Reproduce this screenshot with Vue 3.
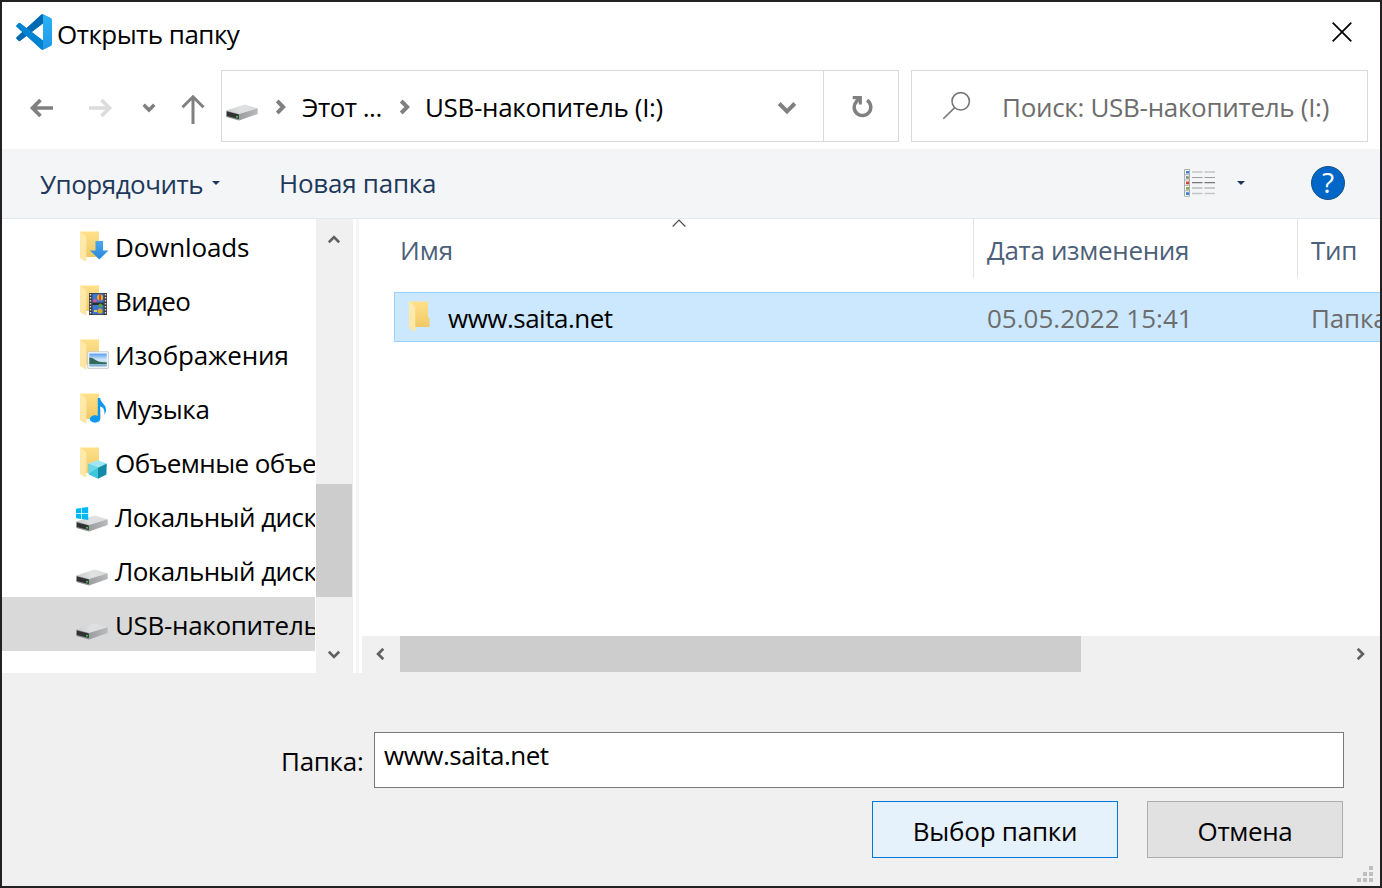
<script setup>
const places = [
  { name: 'Downloads', kind: 'down', ls: '-0.15px' },
  { name: 'Видео', kind: 'video', ls: '-0.65px' },
  { name: 'Изображения', kind: 'image', ls: '-0.1px' },
  { name: 'Музыка', kind: 'music', ls: '-0.4px' },
  { name: 'Объемные объекты', kind: 'cube', ls: '-0.58px' },
  { name: 'Локальный диск (C:)', kind: 'windrive', ls: '-0.55px' },
  { name: 'Локальный диск (D:)', kind: 'drive', ls: '-0.55px' },
  { name: 'USB-накопитель (I:)', kind: 'drive', ls: '-0.33px', current: true },
]
const isDrive = (k) => k === 'drive' || k === 'windrive'
</script>

<template>
  <div class="window">
    <svg class="defs" width="0" height="0">
      <defs>
        <linearGradient id="gBack" x1="0" y1="0" x2="0" y2="1">
          <stop offset="0" stop-color="#ffe18a" /><stop offset="1" stop-color="#efc966" />
        </linearGradient>
        <linearGradient id="gFlap" x1="0" y1="0" x2="0" y2="1">
          <stop offset="0" stop-color="#ffeaad" /><stop offset="1" stop-color="#fde6a4" />
        </linearGradient>
        <linearGradient id="gTop" x1="0" y1="0" x2="1" y2="0">
          <stop offset="0" stop-color="#cbcccd" /><stop offset="0.5" stop-color="#e0e1e3" /><stop offset="1" stop-color="#d9dadc" />
        </linearGradient>
        <linearGradient id="gSide" x1="0" y1="0" x2="1" y2="0">
          <stop offset="0" stop-color="#9c9d9f" /><stop offset="1" stop-color="#b9babc" />
        </linearGradient>
        <linearGradient id="gArrow" x1="0" y1="0" x2="0" y2="1">
          <stop offset="0" stop-color="#4aa8ec" /><stop offset="1" stop-color="#2a88dc" />
        </linearGradient>
        <linearGradient id="gSky" x1="0" y1="0" x2="0" y2="1">
          <stop offset="0" stop-color="#5a9bf0" /><stop offset="0.5" stop-color="#d5ecfa" /><stop offset="1" stop-color="#6ea9cc" />
        </linearGradient>
        <linearGradient id="gCode" x1="0" y1="0" x2="0" y2="1">
          <stop offset="0" stop-color="#2bb4f6" /><stop offset="1" stop-color="#2196e8" />
        </linearGradient>
        <symbol id="folder" viewBox="0 0 34 36">
          <path d="M4 3.500h19v15.500l1.500 1v9H10L4 28z" fill="url(#gBack)" />
          <path d="M4 3.500l6.300 5v25.500L4 30z" fill="url(#gFlap)" />
        </symbol>
        <symbol id="drive" viewBox="0 0 32 17">
          <path d="M.3 6.500L18.500.4 31.700 4.300 13 10z" fill="url(#gTop)" />
          <path d="M13 10L31.700 4.300v5.600L13 16.500z" fill="url(#gSide)" />
          <path d="M.3 6.500L13 10v6.500L.3 13z" fill="#8f9091" />
          <path d="M.8 7.500l12 3v4.500L.8 12z" fill="#303132" />
          <circle cx="11" cy="12.700" r="1" fill="#2edb3c" />
        </symbol>
        <clipPath id="codeClip">
          <path clip-rule="evenodd" d="M70.912 99.317C72.487 99.931 74.283 99.891 75.873 99.126L96.461 89.220C98.624 88.179 100 85.989 100 83.587V16.413C100 14.011 98.624 11.822 96.461 10.781L75.873.874C73.786-.130 71.345.116 69.514 1.447C69.252 1.637 69.003 1.849 68.769 2.083L29.355 38.042L12.187 25.010C10.589 23.797 8.354 23.896 6.869 25.246L1.363 30.255C-.453 31.906-.455 34.763 1.359 36.417L16.247 50L1.359 63.583C-.455 65.237-.453 68.094 1.363 69.745L6.869 74.754C8.354 76.104 10.589 76.204 12.187 74.991L29.355 61.959L68.769 97.917C69.393 98.541 70.125 99.010 70.912 99.317ZM75.015 27.299L45.109 50L75.015 72.701V27.299Z" />
        </clipPath>
      </defs>
    </svg>

    <header class="title">
      <svg class="logo" width="36" height="36" viewBox="0 0 100 100">
        <g clip-path="url(#codeClip)">
          <path fill="#006bb3" d="M96.461 10.796L75.857.876C73.472-.273 70.622.212 68.750 2.083L1.299 63.583C-.516 65.237-.514 68.094 1.303 69.745L6.813 74.754C8.298 76.104 10.535 76.204 12.134 74.991L93.361 13.370C96.086 11.303 100 13.246 100 16.667Z" />
          <path fill="#0083d2" d="M96.461 89.204L75.857 99.125C73.472 100.273 70.622 99.788 68.750 97.917L1.299 36.417C-.516 34.763-.514 31.906 1.303 30.255L6.813 25.246C8.298 23.896 10.535 23.796 12.134 25.010L93.361 86.630C96.086 88.697 100 86.754 100 83.333Z" />
          <path fill="url(#gCode)" d="M75.858 99.126C73.472 100.274 70.622 99.789 68.750 97.917C71.056 100.223 75 98.590 75 95.328V4.672C75 1.410 71.056-.223 68.750 2.083C70.622.211 73.472-.274 75.858.874L100 12V88Z" />
        </g>
      </svg>
      <span class="caption">Открыть папку</span>
      <svg class="close" width="20" height="20" viewBox="0 0 20 20"><path d="M.7.700l18.600 18.600M19.300.7L.7 19.300" stroke="#000" stroke-width="1.700" fill="none" /></svg>
    </header>

    <nav class="nav">
      <svg class="arrows" width="219" height="72" viewBox="2 70 219 72" fill="none">
        <path d="M53 108H33M40.500 100l-8 8 8 8" stroke="#808080" stroke-width="3.700" />
        <path d="M89 108h20M101.500 100l8 8-8 8" stroke="#dcdcdc" stroke-width="3.700" />
        <path d="M143.700 104.700l5.300 5.300 5.300-5.300" stroke="#808080" stroke-width="3.400" />
        <path d="M193 124V97M182.500 107.300L193 96.800l10.500 10.500" stroke="#808080" stroke-width="3" />
      </svg>
      <div class="address">
        <div class="crumbs">
          <svg class="crumb-drive" width="32" height="17"><use href="#drive" /></svg>
          <svg class="chev" width="12" height="16" viewBox="0 0 12 16"><path d="M2.200 2l6 6-6 6" fill="none" stroke="#808080" stroke-width="3.900" /></svg>
          <span class="c1">Этот ...</span>
          <svg class="chev second" width="12" height="16" viewBox="0 0 12 16"><path d="M2.200 2l6 6-6 6" fill="none" stroke="#808080" stroke-width="3.900" /></svg>
          <span class="c2">USB-накопитель (I:)</span>
          <svg class="drop" width="20" height="14" viewBox="0 0 20 14"><path d="M2.200 2.500L10 10.300l7.800-7.800" fill="none" stroke="#808080" stroke-width="4" /></svg>
        </div>
        <div class="refresh">
          <svg width="24" height="24" viewBox="0 0 24 24" fill="none">
            <path d="M18 6.300A8.300 8.300 0 1 1 7.500 7.500L10 5" stroke="#808080" stroke-width="3.500" />
            <path d="M3.700 3.700h7.600v6.800" stroke="#808080" stroke-width="3.200" />
          </svg>
        </div>
      </div>
      <div class="search">
        <svg width="30" height="30" viewBox="0 0 30 30" fill="none" stroke="#777" stroke-width="1.600"><circle cx="18.700" cy="10.300" r="8.700" /><path d="M12.700 16.600L1.300 27.800" /></svg>
        <span>Поиск: USB-накопитель (I:)</span>
      </div>
    </nav>

    <div class="toolbar">
      <span class="organize">Упорядочить</span>
      <i class="tri" />
      <span class="newfolder">Новая папка</span>
      <svg class="views" width="32" height="28" viewBox="0 0 32 28">
        <path d="M.5.500h5v26.800h-5z" fill="#fff" stroke="#a5abb2" />
        <path d="M0 5.700h6M0 11h6M0 16.400h6M0 21.800h6" stroke="#a5abb2" />
        <path d="M2 2h3v2.600H2zM2 23.300h3V26H2z" fill="#3a82cf" />
        <path d="M2 7.300h3v2.600H2z" fill="#b49a55" /><path d="M2 7.300h1.500v1.500H2z" fill="#3a82cf" />
        <path d="M2 12.500h3v2.800H2z" fill="#d5442a" />
        <path d="M2 18h3v2.800H2z" fill="#86b044" />
        <path d="M8 3h10.500M20.500 3H31M8 24.500h10.500M20.500 24.500H31" stroke="#c3c5c7" stroke-width="1.600" />
        <path d="M8 8.500h10.500M20.500 8.500H31M8 19h10.500M20.500 19H31" stroke="#9b9da0" stroke-width="1.200" />
        <path d="M8 13.600h10.500M20.500 13.600H31" stroke="#75777a" stroke-width="1.200" />
      </svg>
      <i class="tri second" />
      <span class="help">?</span>
    </div>

    <main class="content">
      <ul class="tree">
        <li v-for="p in places" :key="p.name" :class="{ current: p.current }">
          <svg class="picon" width="34" height="36" viewBox="0 0 34 36">
            <use v-if="!isDrive(p.kind)" href="#folder" width="34" height="36" />
            <use v-else href="#drive" y="17" width="32" height="17" />
            <path v-if="p.kind === 'down'" d="M19.500 13h7.500v9.500h5.500L23.300 31.500 14 22.500h5.500z" fill="url(#gArrow)" />
            <g v-if="p.kind === 'video'">
              <path d="M13 11h18v22H13z" fill="#3c3d42" />
              <path d="M16.500 11.700h11v10h-11zM16.500 23h11v9.300h-11z" fill="#3c78d0" />
              <path d="M14.500 12v20M29.500 12v20" stroke="#d8d8d8" stroke-width="1.400" stroke-dasharray="1.500 1.500" />
              <circle cx="24" cy="15.500" r="3" fill="#e8b52c" /><path d="M23 12.500h2v6h-2z" fill="#d54b28" />
              <circle cx="19" cy="19" r="2" fill="#c85aa0" />
              <path d="M16.500 20.500h11v2.500h-11z" fill="#2b302c" />
              <circle cx="24.500" cy="23.500" r="2" fill="#58a03a" /><circle cx="24" cy="29" r="2.500" fill="#e3a62b" /><path d="M18 28h3v2h-3z" fill="#d2d05a" />
            </g>
            <g v-if="p.kind === 'image'">
              <path d="M11.800 15.800h20.500v16.500H11.800z" fill="#fff" stroke="#c7cacd" />
              <path d="M13.300 17.500h17.500v13H13.300z" fill="url(#gSky)" />
              <path d="M13.300 21.500c4 0 7 3.500 11 4.500l6.500.5v1.500H13.300z" fill="#35695a" />
            </g>
            <g v-if="p.kind === 'music'" fill="#0c97f0">
              <ellipse cx="19" cy="29" rx="5.200" ry="3.700" />
              <path d="M21.800 8h2.400c.3 5 6 6 5.800 12 0 2-.8 3.500-1.600 5 .6-5-1.200-8-4.200-8.500V29h-2.400z" />
            </g>
            <g v-if="p.kind === 'cube'">
              <path d="M22 16.300l8.800 3.200-8.800 4.200-9.800-4z" fill="#9fe6f2" />
              <path d="M12.200 19.700l9.800 4v11l-9.200-4.300z" fill="#3fc6dd" />
              <path d="M30.800 19.500L22 23.700v11l8.400-4.300z" fill="#128ba8" />
              <path d="M12.200 19.700l9.800 4-9.300 6z" fill="#6bd8e8" />
            </g>
            <path v-if="p.kind === 'windrive'" d="M0 10.700l5.300-.8v5.200H0zM6 9.800l6.200-.9v6.200H6zM0 15.800h5.300v5.200L0 20.200zM6 15.800h6.200v6.200L6 21.100z" fill="#00b8f4" />
          </svg>
          <span :style="{ letterSpacing: p.ls }">{{ p.name }}</span>
        </li>
      </ul>
      <div class="vscroll">
        <svg class="up" width="12" height="9" viewBox="0 0 12 9"><path d="M.8 7.300L6 2.100l5.200 5.200" fill="none" stroke="#606060" stroke-width="2.700" /></svg>
        <div class="vthumb" />
        <svg class="dn" width="12" height="9" viewBox="0 0 12 9"><path d="M.8 1.700L6 6.900l5.200-5.200" fill="none" stroke="#606060" stroke-width="2.700" /></svg>
      </div>
      <div class="splitter" />
      <section class="files">
        <div class="thead">
          <div class="th name"><span>Имя</span>
            <svg class="sort" width="14" height="9" viewBox="0 0 14 9"><path d="M.7 7.500L7 1.200l6.300 6.300" fill="none" stroke="#4a4a4a" stroke-width="1.200" /></svg>
          </div>
          <div class="th date"><span>Дата изменения</span></div>
          <div class="th type"><span>Тип</span></div>
        </div>
        <div class="file">
          <svg class="ficon" width="34" height="36"><use href="#folder" width="34" height="36" /></svg>
          <span class="fname">www.saita.net</span>
          <span class="fdate">05.05.2022 15:41</span>
          <span class="ftype">Папка с файлами</span>
        </div>
        <div class="hscroll">
          <svg class="lf" width="9" height="12" viewBox="0 0 9 12"><path d="M7.300.8L2.100 6l5.200 5.200" fill="none" stroke="#606060" stroke-width="2.700" /></svg>
          <div class="hthumb" />
          <svg class="rt" width="9" height="12" viewBox="0 0 9 12"><path d="M1.700.8L6.900 6l-5.200 5.200" fill="none" stroke="#606060" stroke-width="2.700" /></svg>
        </div>
      </section>
    </main>

    <footer class="footer">
      <div class="field">
        <label>Папка:</label>
        <div class="input">www.saita.net</div>
      </div>
      <div class="actions">
        <button class="primary">Выбор папки</button>
        <button class="cancel">Отмена</button>
      </div>
      <svg class="grip" width="16" height="16" viewBox="0 0 16 16"><path d="M12 0h4v4h-4zM6 6h4v4H6zM12 6h4v4h-4zM0 12h4v4H0zM6 12h4v4H6zM12 12h4v4h-4z" fill="#bfbfbf" /></svg>
    </footer>
  </div>
</template>

<style>
body { background: #fff; }
</style>

<style scoped>
.window {
  box-sizing: border-box; width: 1382px; height: 888px; border: 2px solid #232122;
  background: #fff; overflow: hidden; display: flex; flex-direction: column; position: relative;
  font: 26px/36px "Open Sans", "Noto Sans", sans-serif; color: #000; white-space: nowrap;
}
.defs { position: absolute; }
svg { display: block; flex: none; }
.title { height: 68px; display: flex; align-items: flex-start; flex: none; }
.logo { margin: 12px 0 0 14px; }
.caption { margin: 14px 0 0 5px; letter-spacing: -0.53px; }
.close { margin: 20px 28px 0 auto; }

.nav { height: 79px; display: flex; flex: none; align-items: flex-start; }
.address, .search { box-sizing: border-box; height: 72px; border: 1px solid #d9d9d9; display: flex; align-items: center; }
.address { width: 678px; margin-right: 12px; }
.crumbs { flex: 1; height: 70px; display: flex; align-items: center; }
.crumb-drive { margin: 12px 0 0 4px; }
.chev { margin: 2px 0 0 17px; }
.c1 { margin: 1px 0 0 15px; width: 80px; letter-spacing: -0.5px; }
.chev.second { margin-left: 17px; }
.c2 { margin: 1px 0 0 14px; letter-spacing: -0.33px; }
.drop { margin: 3px 26px 0 auto; }
.refresh { width: 74px; height: 70px; border-left: 1px solid #d9d9d9; display: flex; align-items: center; justify-content: center; }
.search { width: 457px; color: #6d6d6d; }
.search svg { margin-left: 30px; }
.search span { margin: 1px 0 0 30px; letter-spacing: -0.3px; }

.toolbar { box-sizing: border-box; height: 70px; padding-bottom: 2px; flex: none; background: #f4f5f7; border-bottom: 1px solid #e5e8eb; display: flex; align-items: center; color: #1e395b; }
.organize { margin: 3px 0 0 38px; letter-spacing: -0.5px; width: 165px; }
.tri { width: 0; height: 0; border: 4px solid transparent; border-top: 4px solid #1e395b; border-bottom: 0; margin-left: 7px; }
.newfolder { margin: 0 0 0 59px; letter-spacing: -0.25px; }
.views { margin-left: auto; }
.tri.second { margin: 0 66px 0 21px; }
.help { box-sizing: border-box; width: 34px; height: 34px; border-radius: 50%; background: #0067c8; border: 1px solid #1b4f86; color: #fff; text-align: center; line-height: 31px; font-size: 28px; margin-right: 35px; }

.content { height: 454px; flex: none; display: flex; }
.tree { width: 313px; margin: 0; padding: 0; list-style: none; overflow: hidden; }
.tree li { height: 54px; display: flex; align-items: center; }
.tree li.current { background: #d9d9d9; }
.tree span { margin-top: 2px; }
.picon { margin: 0 5px 0 74px; }
.vscroll { width: 37px; margin-left: 1px; background: #f0f0f0; display: flex; flex-direction: column; align-items: center; }
.up { margin: 16px 1px 0 0; }
.vthumb { width: 36px; height: 113px; background: #cdcdcd; margin: 240px 1px 0 0; }
.dn { margin: 53px 1px 0 0; }
.splitter { width: 3px; background: #f6f6f6; margin: 0 0 0 3px; }
.files { flex: 1; min-width: 0; display: flex; flex-direction: column; overflow: hidden; }
.thead { display: flex; height: 59px; flex: none; color: #4c607a; }
.th { box-sizing: border-box; border-right: 1px solid #e5e5e5; padding-top: 13px; flex: none; position: relative; }
.name { width: 615px; padding-left: 41px; }
.sort { position: absolute; left: 313px; top: 0; }
.date { width: 324px; padding-left: 13px; letter-spacing: -0.35px; }
.type { width: 324px; padding-left: 13px; letter-spacing: -0.3px; }
.file { box-sizing: border-box; height: 50px; width: 1200px; flex: none; margin: 14px 0 0 35px; background: #cce8ff; border: 1px solid #99d1ff; display: flex; align-items: center; color: #6d6d6d; }
.ficon { margin: 0 0 2px 10px; }
.file span { margin-top: 1px; }
.fname { width: 539px; margin-left: 9px; letter-spacing: -0.5px; color: #000; }
.fdate { width: 324px; letter-spacing: 0; }
.ftype { letter-spacing: -0.2px; }
.hscroll { height: 37px; margin: auto 0 0 3px; background: #f0f0f0; display: flex; align-items: center; }
.lf { margin: 0 0 1px 14px; }
.hthumb { width: 681px; height: 36px; margin: 0 0 1px 15px; background: #cdcdcd; }
.rt { margin: 0 15px 1px auto; }

.footer { flex: 1; background: #f0f0f0; padding-top: 59px; position: relative; }
.field { display: flex; align-items: flex-start; }
.field label { margin: 11px 0 0 279px; width: 93px; letter-spacing: -0.3px; }
.input { box-sizing: border-box; width: 970px; height: 56px; border: 1px solid #7a7a7a; background: #fff; padding: 4px 0 0 9px; letter-spacing: -0.5px; }
.actions { display: flex; gap: 29px; justify-content: flex-end; margin: 13px 37px 0 0; }
button { box-sizing: border-box; height: 57px; padding: 2px 0 0; font: inherit; color: #000; border: 1px solid #adadad; background: #e1e1e1; border-radius: 0; }
.primary { width: 246px; background: #e5f1fb; border-color: #0078d7; letter-spacing: -0.25px; }
.cancel { width: 196px; letter-spacing: -0.35px; }
.grip { position: absolute; right: 7px; bottom: 4px; }
</style>
